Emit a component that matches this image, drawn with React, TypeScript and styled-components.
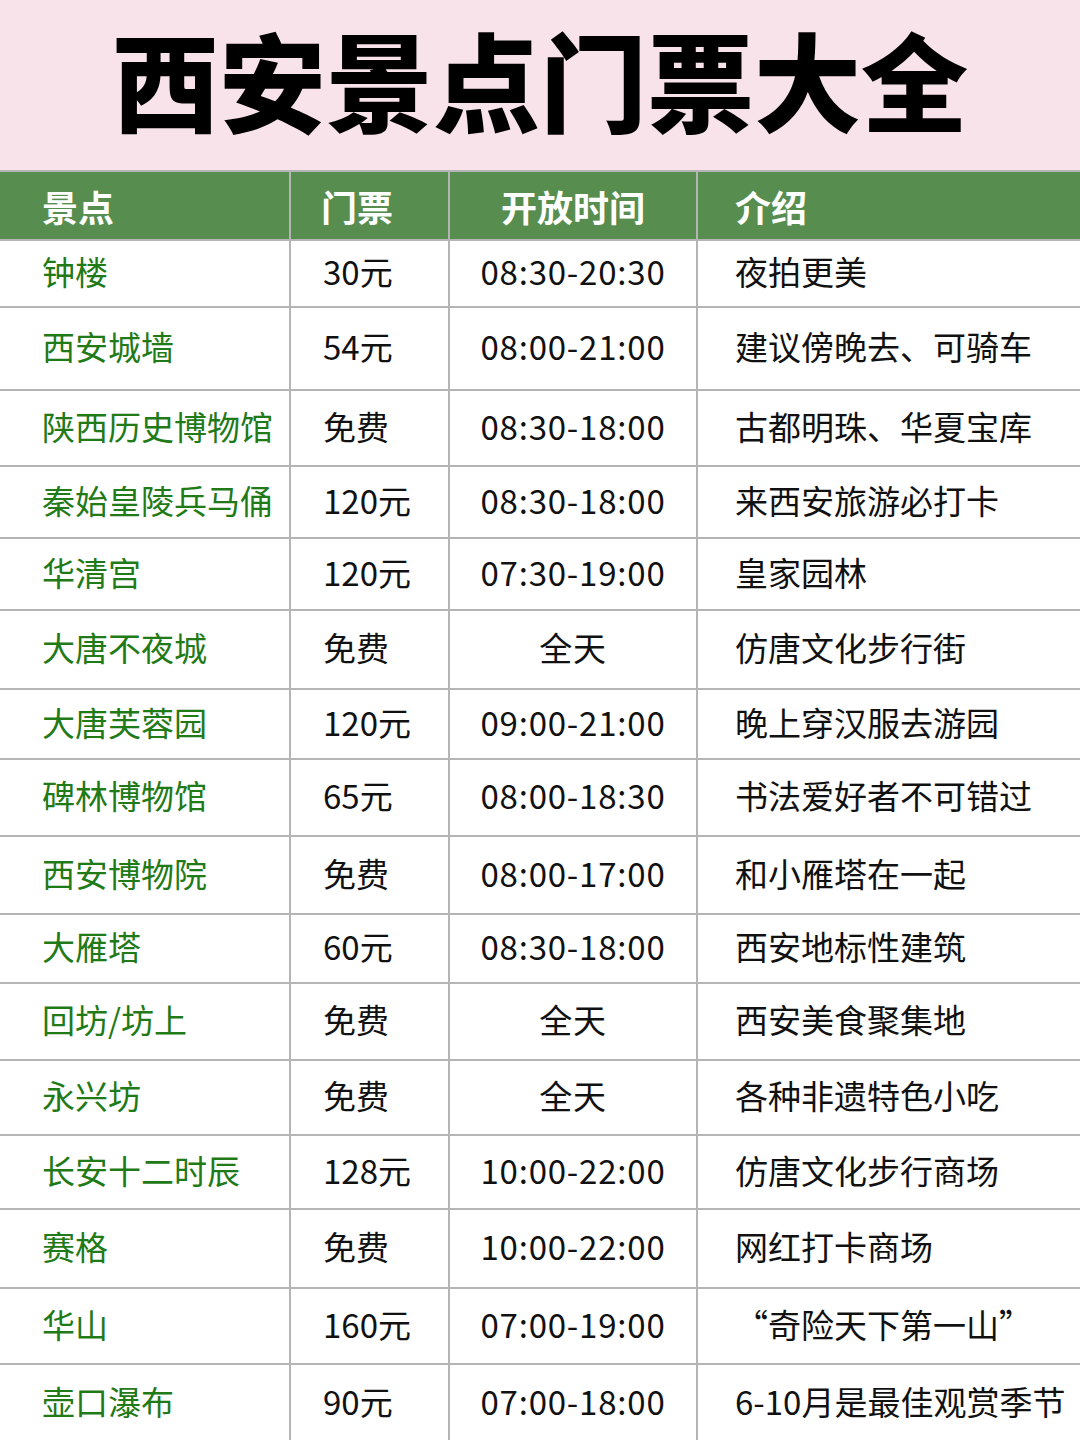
import React from "react";
import styled, { createGlobalStyle } from "styled-components";

const GlobalStyle = createGlobalStyle`
  html, body { margin: 0; padding: 0; background: #ffffff; }
  body { font-family: "Noto Sans CJK SC", "Noto Sans", sans-serif; }
  * { box-sizing: border-box; }
`;

const Page = styled.div`
  width: 1080px;
  height: 1440px;
  overflow: hidden;
  background: #ffffff;
`;

const TitleBar = styled.div`
  height: 170px;
  background: #f9e3ea;
  display: flex;
  align-items: flex-start;
  justify-content: center;
  padding-top: 0;
`;

const Title = styled.h1`
  margin: 0;
  font-family: "Noto Sans CJK SC", sans-serif;
  font-weight: 900;
  font-size: 107px;
  line-height: 155px;
  height: 155px;
  color: #000000;
  letter-spacing: 0;
`;

const Table = styled.div`
  display: flex;
  flex-direction: column;
  border-top: 2px solid #b5b5b5;
`;

const Row = styled.div<{ $h: number; $head?: boolean }>`
  display: grid;
  grid-template-columns: 291px 159px 248px 1fr;
  height: ${(p) => p.$h}px;
  background: ${(p) => (p.$head ? "#578e4f" : "#ffffff")};
  border-bottom: 2px solid #b5b5b5;
`;

const Cell = styled.div<{
  $align?: "left" | "center";
  $pad?: number;
  $head?: boolean;
  $name?: boolean;
  $last?: boolean;
  $time?: boolean;
}>`
  display: flex;
  align-items: center;
  justify-content: ${(p) => (p.$align === "center" ? "center" : "flex-start")};
  padding-left: ${(p) => (p.$align === "center" ? 0 : p.$pad ?? 0)}px;
  border-right: ${(p) => (p.$last ? "none" : "2px solid #b5b5b5")};
  font-family: "Noto Sans CJK SC", sans-serif;
  font-size: ${(p) => (p.$head ? 36 : 33)}px;
  font-weight: ${(p) => (p.$head ? 700 : 400)};
  letter-spacing: ${(p) => (p.$time ? 0.8 : 0)}px;
  color: ${(p) => (p.$head ? "#ffffff" : p.$name ? "#1f7a17" : "#111111")};
  white-space: nowrap;
  line-height: 1.2;
  padding-top: ${(p) => (p.$head ? 3 : 0)}px;
  padding-bottom: ${(p) => (p.$head ? 0 : 3)}px;
`;

type Item = [string, string, string, string, number];

const rows: Item[] = [
  ["钟楼", "30元", "08:30-20:30", "夜拍更美", 67],
  ["西安城墙", "54元", "08:00-21:00", "建议傍晚去、可骑车", 83],
  ["陕西历史博物馆", "免费", "08:30-18:00", "古都明珠、华夏宝库", 76],
  ["秦始皇陵兵马俑", "120元", "08:30-18:00", "来西安旅游必打卡", 72],
  ["华清宫", "120元", "07:30-19:00", "皇家园林", 72],
  ["大唐不夜城", "免费", "全天", "仿唐文化步行街", 79],
  ["大唐芙蓉园", "120元", "09:00-21:00", "晚上穿汉服去游园", 70],
  ["碑林博物馆", "65元", "08:00-18:30", "书法爱好者不可错过", 77],
  ["西安博物院", "免费", "08:00-17:00", "和小雁塔在一起", 78],
  ["大雁塔", "60元", "08:30-18:00", "西安地标性建筑", 69],
  ["回坊/坊上", "免费", "全天", "西安美食聚集地", 77],
  ["永兴坊", "免费", "全天", "各种非遗特色小吃", 75],
  ["长安十二时辰", "128元", "10:00-22:00", "仿唐文化步行商场", 74],
  ["赛格", "免费", "10:00-22:00", "网红打卡商场", 79],
  ["华山", "160元", "07:00-19:00", "“奇险天下第一山”", 76],
  ["壶口瀑布", "90元", "07:00-18:00", "6-10月是最佳观赏季节", 78],
];

export default function App() {
  return (
    <Page>
      <GlobalStyle />
      <TitleBar>
        <Title>西安景点门票大全</Title>
      </TitleBar>
      <Table>
        <Row $h={69} $head>
          <Cell $head $pad={42}>景点</Cell>
          <Cell $head $pad={30}>门票</Cell>
          <Cell $head $align="center">开放时间</Cell>
          <Cell $head $pad={37} $last>介绍</Cell>
        </Row>
        {rows.map(([name, price, time, intro, h]) => (
          <Row key={name} $h={h}>
            <Cell $name $pad={42}>{name}</Cell>
            <Cell $pad={32}>{price}</Cell>
            <Cell $align="center" $time>{time}</Cell>
            <Cell $pad={37} $last>{intro}</Cell>
          </Row>
        ))}
      </Table>
    </Page>
  );
}
